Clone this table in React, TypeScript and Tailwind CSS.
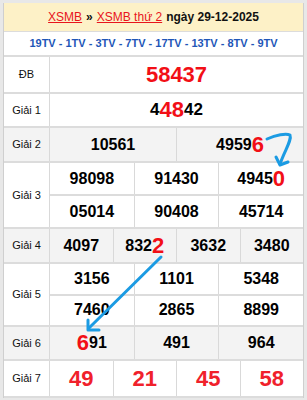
const RED = "text-[#f20f16]";

function Label({ children }: { children: React.ReactNode }) {
  return (
    <div className="w-[46px] shrink-0 flex items-center justify-center border-r border-[#d9d9d9] text-[11px] text-[#111]">
      {children}
    </div>
  );
}

function Cell({ children, last }: { children: React.ReactNode; last?: boolean }) {
  return (
    <div
      className={
        "flex-1 flex items-center justify-center text-[16px] font-bold text-black " +
        (last ? "" : "border-r border-[#d9d9d9]")
      }
    >
      {children}
    </div>
  );
}

function Big({ children }: { children: React.ReactNode }) {
  return <span className={`text-[22px] leading-none ${RED}`}>{children}</span>;
}

export default function App() {
  return (
    <div
      className="relative w-[307px] h-[400px] bg-[#e8e8e8] pt-[3px] px-[3px] overflow-hidden"
      style={{ fontFamily: '"Liberation Sans", Arial, sans-serif' }}
    >
      <div className="border-l border-r border-[#cfcfcf] bg-white">
        {/* header */}
        <div className="h-[29px] bg-[#fdf1c7] flex items-center justify-center text-[12px] font-bold text-[#111] border-b border-[#dcdcdc]">
          <span className="underline text-[#e8141c] font-normal">XSMB</span>
          <span className="mx-[4px]">»</span>
          <span className="underline text-[#e8141c] font-normal">XSMB thứ 2</span>
          <span className="ml-[4px]">ngày 29-12-2025</span>
        </div>
        <div className="h-[25px] flex items-center justify-center text-[11px] font-bold text-[#1e56b8] border-b-2 border-[#dcdcdc]">
          19TV - 1TV - 3TV - 7TV - 17TV - 13TV - 8TV - 9TV
        </div>

        {/* ĐB */}
        <div className="h-[37px] flex border-b-2 border-[#dcdcdc]">
          <Label>ĐB</Label>
          <div className={`flex-1 flex items-center justify-center text-[22px] font-bold ${RED}`}>58437</div>
        </div>

        {/* Giải 1 */}
        <div className="h-[34px] flex border-b-2 border-[#dcdcdc]">
          <Label>Giải 1</Label>
          <div className="flex-1 flex items-center justify-center text-[17px] font-bold text-black">
            4<Big>48</Big>42
          </div>
        </div>

        {/* Giải 2 */}
        <div className="h-[35px] flex bg-[#f3f3f3] border-b-2 border-[#dcdcdc]">
          <Label>Giải 2</Label>
          <Cell>10561</Cell>
          <Cell last>
            4959<Big>6</Big>
          </Cell>
        </div>

        {/* Giải 3 */}
        <div className="h-[66px] flex border-b-2 border-[#dcdcdc]">
          <Label>Giải 3</Label>
          <div className="flex-1 flex flex-col">
            <div className="flex-1 flex border-b-2 border-[#dcdcdc]">
              <Cell>98098</Cell>
              <Cell>91430</Cell>
              <Cell last>
                4945<Big>0</Big>
              </Cell>
            </div>
            <div className="flex-1 flex">
              <Cell>05014</Cell>
              <Cell>90408</Cell>
              <Cell last>45714</Cell>
            </div>
          </div>
        </div>

        {/* Giải 4 */}
        <div className="h-[35px] flex bg-[#f3f3f3] border-b-2 border-[#dcdcdc]">
          <Label>Giải 4</Label>
          <Cell>4097</Cell>
          <Cell>
            832<Big>2</Big>
          </Cell>
          <Cell>3632</Cell>
          <Cell last>3480</Cell>
        </div>

        {/* Giải 5 */}
        <div className="h-[63px] flex border-b-2 border-[#dcdcdc]">
          <Label>Giải 5</Label>
          <div className="flex-1 flex flex-col">
            <div className="flex-1 flex border-b-2 border-[#dcdcdc]">
              <Cell>3156</Cell>
              <Cell>1101</Cell>
              <Cell last>5348</Cell>
            </div>
            <div className="flex-1 flex">
              <Cell>7460</Cell>
              <Cell>2865</Cell>
              <Cell last>8899</Cell>
            </div>
          </div>
        </div>

        {/* Giải 6 */}
        <div className="h-[34px] flex bg-[#f3f3f3] border-b-2 border-[#dcdcdc]">
          <Label>Giải 6</Label>
          <Cell>
            <Big>6</Big>91
          </Cell>
          <Cell>491</Cell>
          <Cell last>964</Cell>
        </div>

        {/* Giải 7 */}
        <div className="h-[37px] flex border-b-2 border-[#dcdcdc]">
          <Label>Giải 7</Label>
          {["49", "21", "45", "58"].map((n, i) => (
            <div
              key={n}
              className={
                "flex-1 flex items-center justify-center text-[22px] font-bold text-[#f0212b] " +
                (i < 3 ? "border-r border-[#d9d9d9]" : "")
              }
            >
              {n}
            </div>
          ))}
        </div>
      </div>

      {/* hand-drawn arrows */}
      <svg
        className="absolute inset-0 pointer-events-none"
        width="307"
        height="400"
        viewBox="0 0 307 400"
        fill="none"
        stroke="#1b9be3"
        strokeWidth="3"
        strokeLinecap="round"
        strokeLinejoin="round"
      >
        <path d="M267 139 C 276 135, 286 133, 290 135 C 292 140, 285 150, 280 164" />
        <path d="M276 157 L280 165 L288 162" />
        <path d="M161 257 L89 328" />
        <path d="M88 320 L88 330 L99 330" />
      </svg>
    </div>
  );
}
